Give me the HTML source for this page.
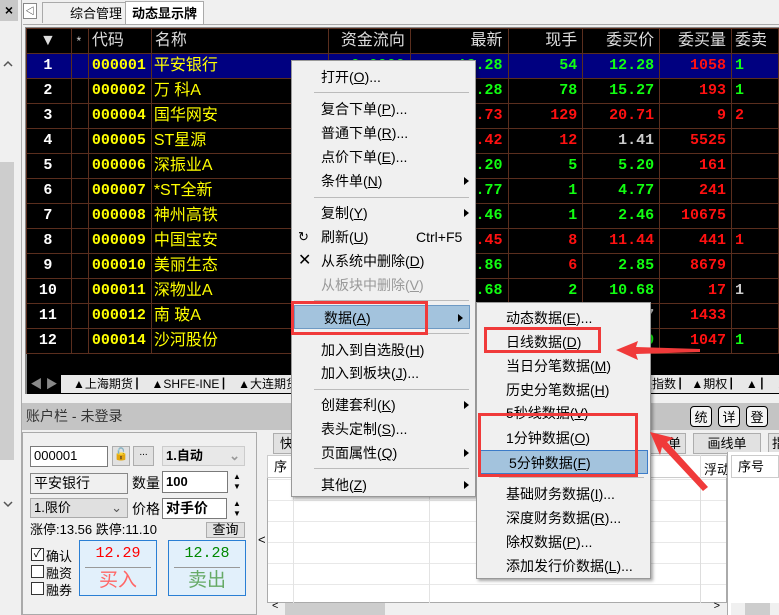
<!DOCTYPE html>
<html><head><meta charset="utf-8"><style>
*{margin:0;padding:0;box-sizing:border-box}
body{width:779px;height:615px;overflow:hidden;background:#f0f0f0;position:relative;font-family:"Liberation Sans","Noto Sans CJK SC",sans-serif;font-size:13px;color:#000}
.a{position:absolute}
table{border-collapse:collapse;table-layout:fixed;position:absolute;left:26px;top:28px;background:#000}
tr{height:25px}
td{height:25px;line-height:20px;vertical-align:middle;border:1px solid #5a2e1e;color:#fff;font-size:15px;font-weight:bold;white-space:nowrap;overflow:hidden;padding:0 5px 0 3px;text-align:right;font-family:"Liberation Mono","Noto Sans CJK SC",monospace}
tr.h td{font-weight:normal;color:#ddd;font-family:"Liberation Sans","Noto Sans CJK SC",sans-serif;font-size:16px}
tr.sel td{background:#000080}
td.c{text-align:center}
td.y{color:#ff0;text-align:left;font-size:15px}
td.n{color:#ff0;text-align:left;font-weight:normal;font-family:"Liberation Sans","Noto Sans CJK SC",sans-serif;font-size:16px;padding-left:2px}
.g{color:#1f1}.r{color:#f11}.w{color:#ccc}
.menu{position:absolute;background:#f0f0f0;border:1px solid #999;box-shadow:2px 2px 3px rgba(0,0,0,.35)}
.mi{position:absolute;left:0;right:0;height:24px;line-height:24px;padding-left:29px;font-size:14px}
.sep{position:absolute;left:22px;right:6px;height:1px;background:#bbb}
.arr{position:absolute;right:6px;top:8px;border-left:5px solid #000;border-top:4px solid transparent;border-bottom:4px solid transparent}
.box{position:absolute;border:3px solid #f03a3a}
.inp{position:absolute;background:#fff;border:1px solid #7a7a7a;font-size:13px;line-height:18px;padding-left:3px}
.btn{position:absolute;background:#e1e1e1;border:1px solid #adadad;text-align:center;font-size:13px}
.cb{position:absolute;width:13px;height:13px;border:1px solid #333;background:#fff}
</style></head><body>
<div class="a" style="left:0;top:0;width:18px;height:21px;background:#c8c8c8;text-align:center;font-size:14px;font-weight:bold;line-height:21px">×</div>
<svg class="a" style="left:2px;top:60px" width="12" height="8"><path d="M2 6 L6 2 L10 6" stroke="#555" stroke-width="1.5" fill="none"/></svg>
<div class="a" style="left:0;top:162px;width:14px;height:298px;background:#cdcdcd"></div>
<svg class="a" style="left:2px;top:500px" width="12" height="8"><path d="M2 2 L6 6 L10 2" stroke="#555" stroke-width="1.5" fill="none"/></svg>
<div class="a" style="left:21px;top:0;width:1px;height:615px;background:#aaa"></div>
<div class="a" style="left:23px;top:3px;width:14px;height:16px;border:1px solid #888;background:#fff;font-size:9px;line-height:14px;text-align:center">◁</div>
<div class="a" style="left:42px;top:2px;width:84px;height:21px;border:1px solid #aaa;border-bottom:none;font-size:13px;line-height:22px;padding-left:27px;background:#f0f0f0">综合管理</div>
<div class="a" style="left:125px;top:1px;width:79px;height:24px;border:1px solid #aaa;border-bottom:none;background:#fff;font-size:13px;font-weight:bold;line-height:24px;padding-left:6px">动态显示牌</div>
<div class="a" style="left:23px;top:24px;width:756px;height:1px;background:#aaa"></div>
<div class="a" style="left:25px;top:27px;width:754px;height:367px;background:#000;border-left:2px solid #888;border-top:1px solid #888"></div>
<table>
<colgroup><col style="width:45px"><col style="width:17px"><col style="width:62px"><col style="width:178px"><col style="width:82px"><col style="width:98px"><col style="width:75px"><col style="width:77px"><col style="width:72px"><col style="width:47px"></colgroup>
<tr class="h"><td class="c">▼</td><td class="c" style="font-size:12px">*</td><td style="text-align:left">代码</td><td style="text-align:left">名称</td><td>资金流向</td><td>最新</td><td>现手</td><td>委买价</td><td>委买量</td><td style="text-align:left">委卖</td></tr>
<tr class="sel"><td class="c">1</td><td></td><td class="y">000001</td><td class="n">平安银行</td><td class="g">0.0000</td><td class="g">12.28</td><td class="g">54</td><td class="g">12.28</td><td class="r">1058</td><td class="g" style="text-align:left">1</td></tr>
<tr><td class="c">2</td><td></td><td class="y">000002</td><td class="n">万 科A</td><td></td><td class="g">15.28</td><td class="g">78</td><td class="g">15.27</td><td class="r">193</td><td class="g" style="text-align:left">1</td></tr>
<tr><td class="c">3</td><td></td><td class="y">000004</td><td class="n">国华网安</td><td></td><td class="r">20.73</td><td class="r">129</td><td class="r">20.71</td><td class="r">9</td><td class="r" style="text-align:left">2</td></tr>
<tr><td class="c">4</td><td></td><td class="y">000005</td><td class="n">ST星源</td><td></td><td class="r">1.42</td><td class="r">12</td><td class="w">1.41</td><td class="r">5525</td><td></td></tr>
<tr><td class="c">5</td><td></td><td class="y">000006</td><td class="n">深振业A</td><td></td><td class="g">5.20</td><td class="g">5</td><td class="g">5.20</td><td class="r">161</td><td></td></tr>
<tr><td class="c">6</td><td></td><td class="y">000007</td><td class="n">*ST全新</td><td></td><td class="g">4.77</td><td class="g">1</td><td class="g">4.77</td><td class="r">241</td><td></td></tr>
<tr><td class="c">7</td><td></td><td class="y">000008</td><td class="n">神州高铁</td><td></td><td class="g">2.46</td><td class="g">1</td><td class="g">2.46</td><td class="r">10675</td><td></td></tr>
<tr><td class="c">8</td><td></td><td class="y">000009</td><td class="n">中国宝安</td><td></td><td class="r">11.45</td><td class="r">8</td><td class="r">11.44</td><td class="r">441</td><td class="r" style="text-align:left">1</td></tr>
<tr><td class="c">9</td><td></td><td class="y">000010</td><td class="n">美丽生态</td><td></td><td class="g">2.86</td><td class="r">6</td><td class="g">2.85</td><td class="r">8679</td><td></td></tr>
<tr><td class="c">10</td><td></td><td class="y">000011</td><td class="n">深物业A</td><td></td><td class="g">10.68</td><td class="g">2</td><td class="g">10.68</td><td class="r">17</td><td class="w" style="text-align:left">1</td></tr>
<tr><td class="c">11</td><td></td><td class="y">000012</td><td class="n">南 玻A</td><td></td><td class="w">5.47</td><td class="w">7</td><td class="w">5.47</td><td class="r">1433</td><td></td></tr>
<tr><td class="c">12</td><td></td><td class="y">000014</td><td class="n">沙河股份</td><td></td><td class="g">9.50</td><td class="g">1</td><td class="g">9.50</td><td class="r">1047</td><td class="g" style="text-align:left">1</td></tr>
</table>
<div class="a" style="left:27px;top:375px;width:752px;height:18px;background:#e8e8e8;font-size:12px;line-height:18px;white-space:nowrap;overflow:hidden">
<span style="display:inline-block;width:34px;background:#000;color:#888;height:18px;text-align:center">◀ ▶</span><span style="padding-left:12px">▲上海期货 ▏ ▲SHFE-INE ▏ ▲大连期货 ▏ ▲</span>
<span class="a" style="left:613px;top:0">块指数 ▏▲期权 ▏ ▲ ▏ ▲</span></div>
<div class="a" style="left:22px;top:403px;width:757px;height:27px;background:#c4c4c4;font-size:14px;line-height:27px;padding-left:4px;color:#333">账户栏 - 未登录</div>
<div class="btn" style="left:690px;top:406px;width:22px;height:21px;border:1px solid #000;border-radius:4px;background:#f4f4f4">统</div>
<div class="btn" style="left:718px;top:406px;width:22px;height:21px;border:1px solid #000;border-radius:4px;background:#f4f4f4">详</div>
<div class="btn" style="left:746px;top:406px;width:22px;height:21px;border:1px solid #000;border-radius:4px;background:#f4f4f4">登</div>
<div class="a" style="left:22px;top:432px;width:235px;height:183px;border:1px solid #aaa"></div>
<div class="inp" style="left:30px;top:446px;width:78px;height:21px">000001</div>
<div class="btn" style="left:112px;top:446px;width:18px;height:20px;color:#2a2;font-size:12px">🔓</div>
<div class="btn" style="left:133px;top:446px;width:21px;height:20px;font-size:10px">...</div>
<div class="a" style="left:162px;top:446px;width:83px;height:20px;border:1px solid #ccc;background:#e8e8e8;font-weight:bold;padding-left:3px;line-height:18px">1.自动<span style="float:right;color:#999;padding-right:4px">⌄</span></div>
<div class="a" style="left:30px;top:473px;width:98px;height:21px;border:1px solid #888;padding-left:3px;line-height:19px;font-size:14px">平安银行</div>
<div class="a" style="left:132px;top:473px;font-size:14px;line-height:20px">数量</div>
<div class="inp" style="left:162px;top:471px;width:66px;height:22px;font-weight:bold;line-height:20px">100</div>
<div class="a" style="left:233px;top:472px;font-size:8px;line-height:10px">▲<br>▼</div>
<div class="a" style="left:30px;top:498px;width:98px;height:20px;border:1px solid #aaa;background:#e0e0e0;padding-left:3px;line-height:18px">1.限价<span style="float:right;color:#555;padding-right:5px">⌄</span></div>
<div class="a" style="left:132px;top:499px;font-size:14px;line-height:20px">价格</div>
<div class="inp" style="left:162px;top:498px;width:65px;height:21px;font-weight:bold;font-size:14px">对手价</div>
<div class="a" style="left:233px;top:499px;font-size:8px;line-height:10px">▲<br>▼</div>
<div class="a" style="left:30px;top:521px;font-size:13px;line-height:18px">涨停:13.56 跌停:11.10</div>
<div class="btn" style="left:206px;top:522px;width:39px;height:16px;line-height:14px">查询</div>
<div class="cb" style="left:31px;top:548px;font-size:11px;line-height:11px;text-align:center">✓</div><div class="a" style="left:46px;top:546px;font-size:13px">确认</div>
<div class="cb" style="left:31px;top:565px"></div><div class="a" style="left:46px;top:563px;font-size:13px">融资</div>
<div class="cb" style="left:31px;top:582px"></div><div class="a" style="left:46px;top:580px;font-size:13px">融券</div>
<div class="a" style="left:79px;top:540px;width:78px;height:56px;border:1px solid #2a7fd4;background:#e2f0fb;text-align:center">
<div style="color:#f00;font-size:15px;line-height:26px;font-family:'Liberation Mono',monospace">12.29</div><div style="border-top:1px solid #999;margin:0 5px;color:#f66;font-size:19px;line-height:26px">买入</div></div>
<div class="a" style="left:168px;top:540px;width:78px;height:56px;border:1px solid #2a7fd4;background:#e2f0fb;text-align:center">
<div style="color:#080;font-size:15px;line-height:26px;font-family:'Liberation Mono',monospace">12.28</div><div style="border-top:1px solid #999;margin:0 5px;color:#6a6;font-size:19px;line-height:26px">卖出</div></div>
<div class="a" style="left:258px;top:532px;font-size:13px">&lt;</div>
<div class="btn" style="left:273px;top:433px;width:30px;height:21px;line-height:20px;text-align:left;padding-left:6px">快</div>
<div class="a" style="left:267px;top:455px;width:460px;height:148px;background:#fff;border:1px solid #aaa;background-image:linear-gradient(#e8e8e8 1px,transparent 1px);background-size:100% 21px;background-position:0 23px"></div>
<div class="a" style="left:267px;top:455px;width:460px;height:23px;background:#fff;border:1px solid #ccc;font-size:13px;line-height:22px;padding-left:6px">序</div>
<div class="a" style="left:293px;top:455px;width:1px;height:148px;background:#e3e3e3"></div>
<div class="a" style="left:429px;top:455px;width:1px;height:148px;background:#e3e3e3"></div>
<div class="a" style="left:700px;top:455px;width:1px;height:148px;background:#ddd"></div>
<div class="a" style="left:704px;top:459px;font-size:13px">浮动</div>
<div class="btn" style="left:640px;top:433px;width:46px;height:21px;line-height:20px;text-align:right;padding-right:4px">单</div>
<div class="btn" style="left:693px;top:433px;width:68px;height:21px;line-height:20px">画线单</div>
<div class="btn" style="left:768px;top:433px;width:20px;height:21px;line-height:20px;text-align:left;padding-left:3px">指</div>
<div class="a" style="left:727px;top:452px;width:52px;height:163px;background:#fff;border-left:1px solid #aaa"></div>
<div class="a" style="left:731px;top:455px;width:48px;height:23px;border:1px solid #ccc;font-size:13px;line-height:22px;padding-left:6px;background:#fff">序号</div>
<div class="a" style="left:267px;top:603px;width:458px;height:12px;background:#f0f0f0"><div style="position:absolute;left:18px;width:100px;height:12px;background:#cdcdcd"></div><span style="position:absolute;left:5px;top:-3px;font-size:11px">&lt;</span><span style="position:absolute;right:5px;top:-3px;font-size:11px">&gt;</span></div>
<div class="a" style="left:731px;top:603px;width:48px;height:12px;background:#f0f0f0"><div style="position:absolute;left:14px;width:25px;height:12px;background:#cdcdcd"></div></div>
<div class="menu" style="left:291px;top:60px;width:185px;height:437px">
<div class="mi" style="top:4px">打开(<u>O</u>)...</div>
<div class="sep" style="top:31px"></div>
<div class="mi" style="top:36px">复合下单(<u>P</u>)...</div>
<div class="mi" style="top:60px">普通下单(<u>R</u>)...</div>
<div class="mi" style="top:84px">点价下单(<u>E</u>)...</div>
<div class="mi" style="top:108px">条件单(<u>N</u>)<span class="arr"></span></div>
<div class="sep" style="top:136px"></div>
<div class="mi" style="top:140px">复制(<u>Y</u>)<span class="arr"></span></div>
<div class="mi" style="top:164px"><span style="position:absolute;left:6px;font-size:13px">↻</span>刷新(<u>U</u>)<span style="position:absolute;left:124px">Ctrl+F5</span></div>
<div class="mi" style="top:188px"><span style="position:absolute;left:6px;font-size:16px">✕</span>从系统中删除(<u>D</u>)</div>
<div class="mi" style="top:212px;color:#999">从板块中删除(<u>V</u>)</div>
<div class="sep" style="top:239px"></div>
<div class="mi" style="top:244px;left:2px;right:5px;background:#a3c3dd;border:1px solid #6e9ac4">数据(<u>A</u>)<span class="arr"></span></div>
<div class="sep" style="top:272px"></div>
<div class="mi" style="top:277px">加入到自选股(<u>H</u>)</div>
<div class="mi" style="top:300px">加入到板块(<u>J</u>)...</div>
<div class="sep" style="top:328px"></div>
<div class="mi" style="top:332px">创建套利(<u>K</u>)<span class="arr"></span></div>
<div class="mi" style="top:356px">表头定制(<u>S</u>)...</div>
<div class="mi" style="top:380px">页面属性(<u>Q</u>)<span class="arr"></span></div>
<div class="sep" style="top:407px"></div>
<div class="mi" style="top:412px">其他(<u>Z</u>)<span class="arr"></span></div>
</div>
<div class="menu" style="left:476px;top:302px;width:175px;height:277px">
<div class="mi" style="top:3px">动态数据(<u>E</u>)...</div>
<div class="mi" style="top:27px">日线数据(<u>D</u>)</div>
<div class="mi" style="top:51px">当日分笔数据(<u>M</u>)</div>
<div class="mi" style="top:75px">历史分笔数据(<u>H</u>)</div>
<div class="mi" style="top:98px">5秒线数据(<u>V</u>)</div>
<div class="mi" style="top:123px">1分钟数据(<u>O</u>)</div>
<div class="mi" style="top:147px;left:2px;right:2px;background:#a3c3dd;border:1px solid #3b7bc8">5分钟数据(<u>F</u>)</div>
<div class="sep" style="top:174px"></div>
<div class="mi" style="top:179px">基础财务数据(<u>I</u>)...</div>
<div class="mi" style="top:203px">深度财务数据(<u>R</u>)...</div>
<div class="mi" style="top:227px">除权数据(<u>P</u>)...</div>
<div class="mi" style="top:251px">添加发行价数据(<u>L</u>)...</div>
</div>
<div class="box" style="left:291px;top:301px;width:137px;height:34px"></div>
<div class="box" style="left:484px;top:327px;width:117px;height:26px"></div>
<div class="box" style="left:478px;top:413px;width:160px;height:64px"></div>
<svg class="a" style="left:0;top:0" width="779" height="615">
<polygon points="616,350 638,341 636,347 700,349 700,352 636,354 638,360" fill="#f03a3a"/>
<polygon points="650,432 674,438 667,442 708,487 703,491 662,447 660,455" fill="#f03a3a"/>
</svg>
</body></html>
